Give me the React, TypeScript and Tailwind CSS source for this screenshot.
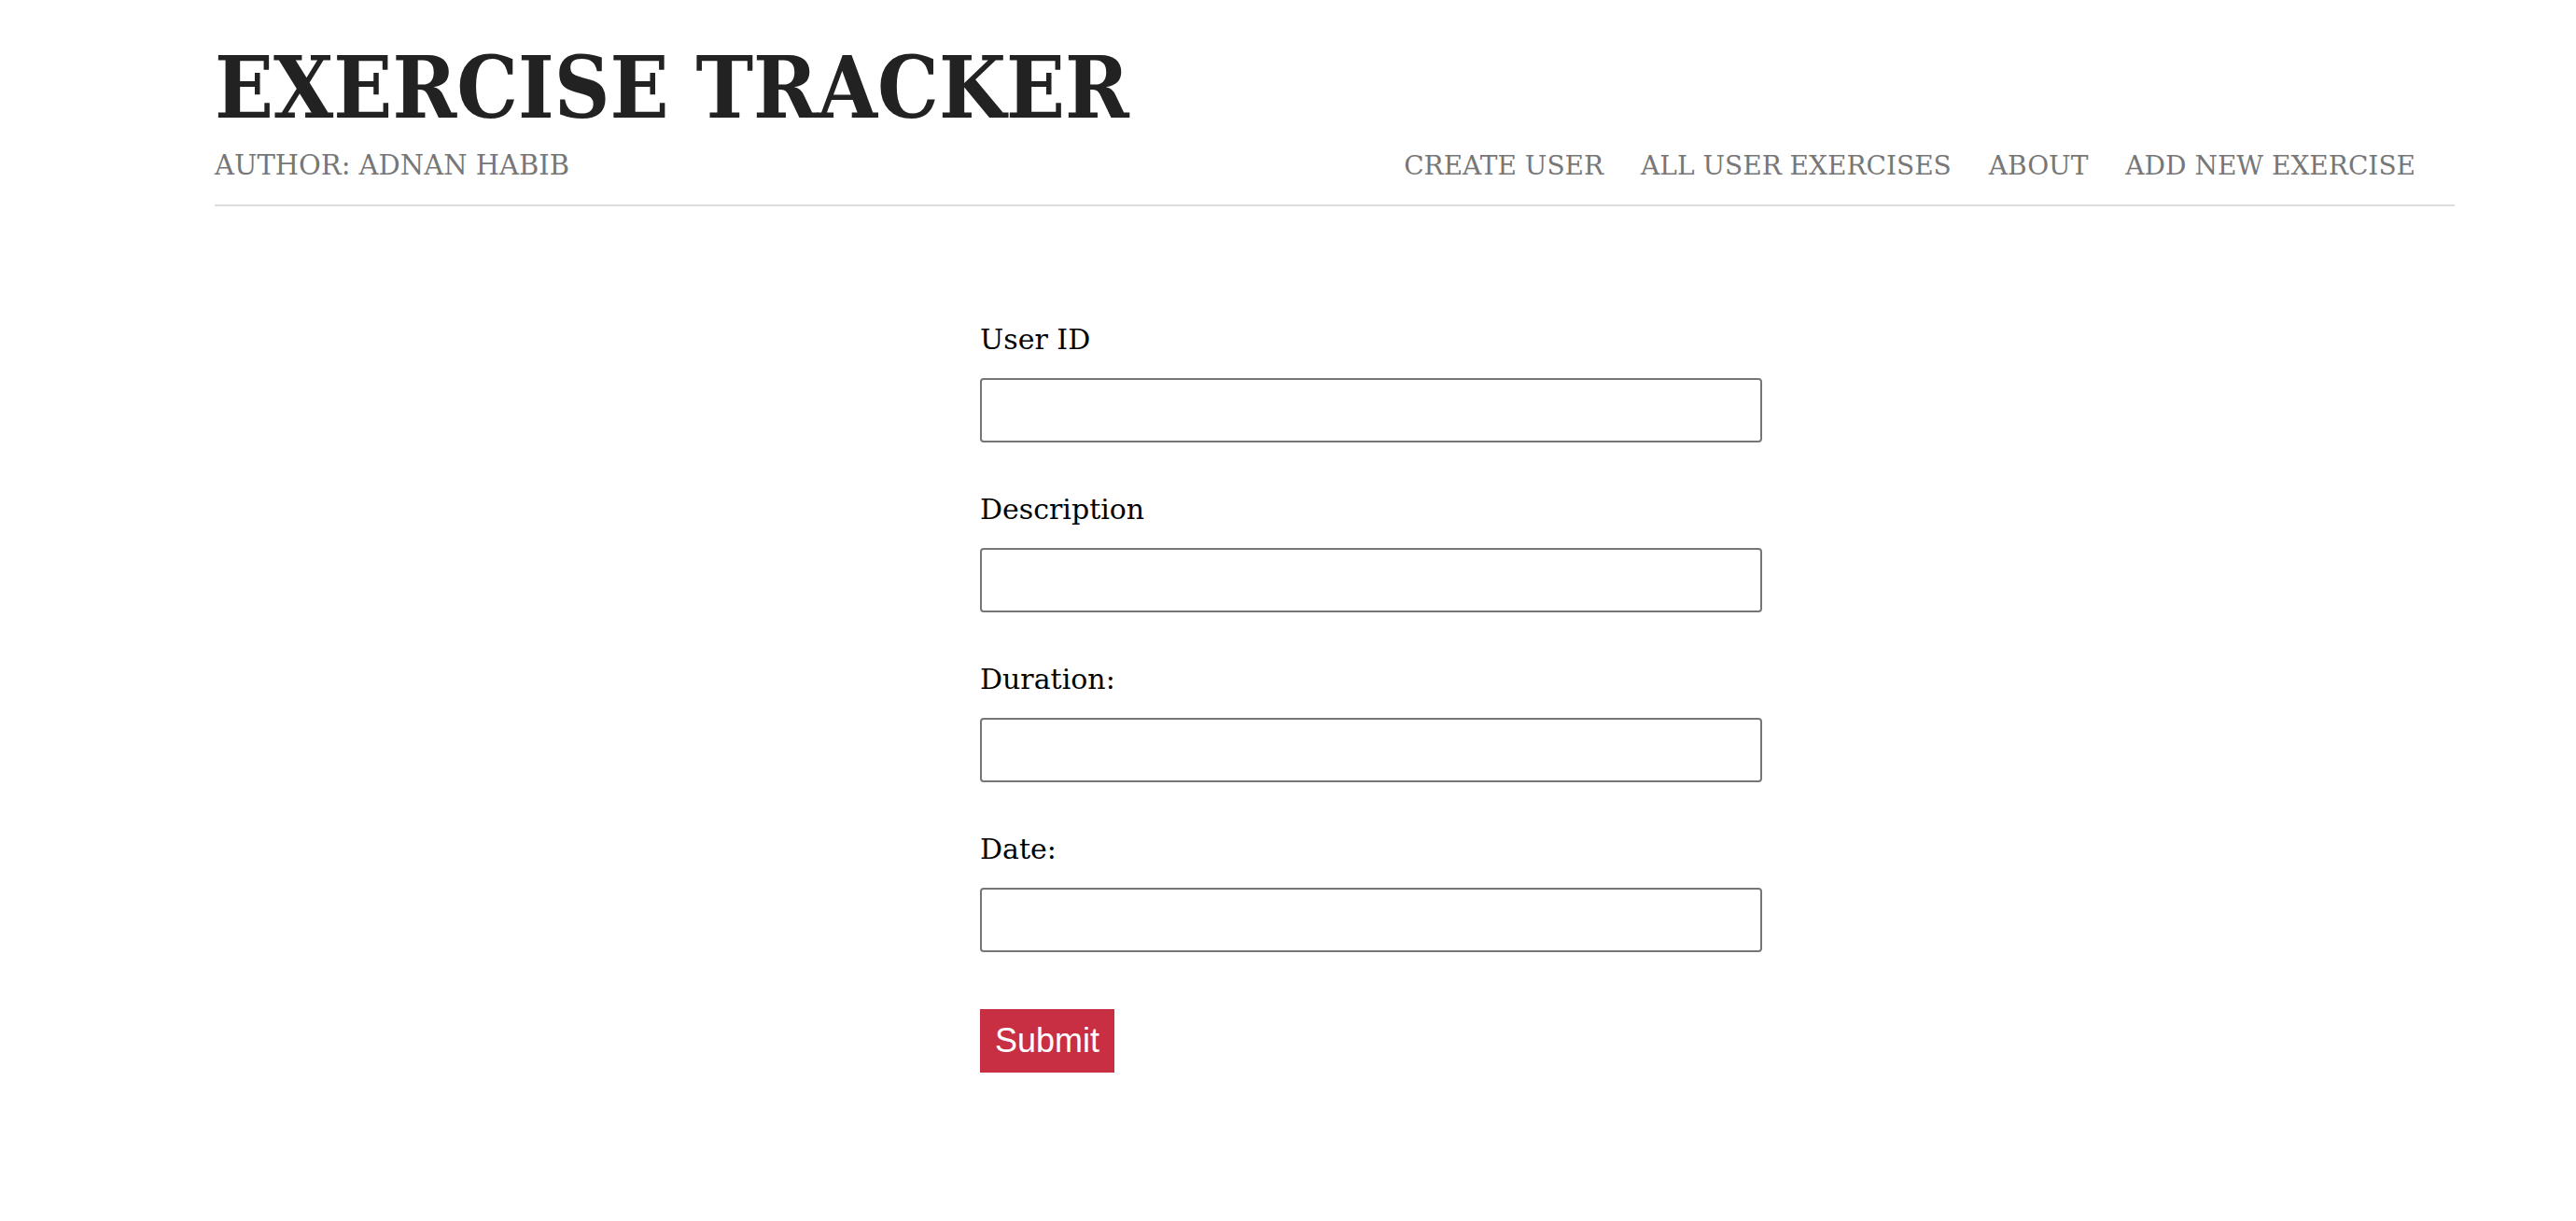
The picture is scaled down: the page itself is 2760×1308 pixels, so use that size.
const navLinks = ["CREATE USER", "ALL USER EXERCISES", "ABOUT", "ADD NEW EXERCISE"];

const fields = ["User ID", "Description", "Duration:", "Date:"];

export default function App() {
  return (
    <div className="min-h-screen bg-white font-['DejaVu_Serif',serif]">
      <header className="ml-[230px] w-[2400px] border-b-2 border-[#dddddd] pb-[21px]">
        <h1 className="mt-[48px] font-['DejaVu_Serif_Condensed','DejaVu_Serif',serif] font-stretch-condensed text-[92px] font-bold leading-none text-[#222222]">
          EXERCISE TRACKER
        </h1>
        <div className="mt-[17px] flex items-baseline justify-between leading-[40px] text-[#777777]">
          <span className="text-[29px]">AUTHOR: ADNAN HABIB</span>
          <nav className="flex pr-[22px] text-[28px]">
            {navLinks.map((link) => (
              <a key={link} href="#" className="px-[20px]">
                {link}
              </a>
            ))}
          </nav>
        </div>
      </header>

      <form className="ml-[1050px] mt-[125px] flex w-[838px] flex-col">
        {fields.map((field) => (
          <div key={field} className="mb-[54px] flex flex-col">
            <label className="text-[30px] leading-[36px] text-black">{field}</label>
            <input
              type="text"
              className="mt-[23px] h-[69px] w-full rounded-[4px] border-2 border-[#767676] bg-white"
            />
          </div>
        ))}
        <div className="mt-[7px]">
          <button
            type="submit"
            className="h-[68px] w-[144px] bg-[#c82f43] font-['Liberation_Sans',sans-serif] text-[36px] text-white"
          >
            Submit
          </button>
        </div>
      </form>
    </div>
  );
}
